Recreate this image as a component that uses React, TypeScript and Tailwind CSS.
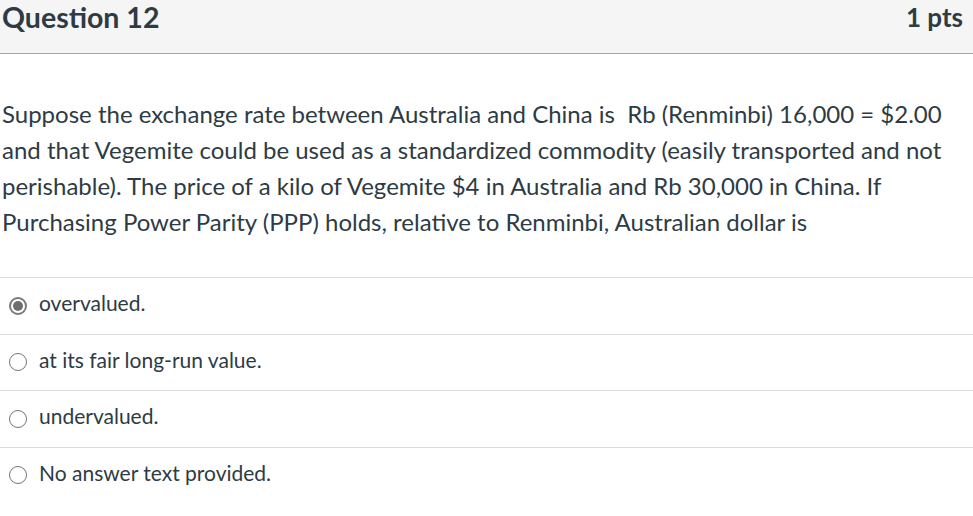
import React from "react";

const answers = [
  { text: "overvalued.", selected: true },
  { text: "at its fair long-run value.", selected: false },
  { text: "undervalued.", selected: false },
  { text: "No answer text provided.", selected: false },
];

const lines = [
  "Suppose the exchange rate between Australia and China is\u00a0 Rb (Renminbi) 16,000 = $2.00",
  "and that Vegemite could be used as a standardized commodity (easily transported and not",
  "perishable). The price of a kilo of Vegemite $4 in Australia and Rb 30,000 in China. If",
  "Purchasing Power Parity (PPP) holds, relative to Renminbi, Australian dollar is",
];

export default function App() {
  return (
    <div
      className="w-[973px] h-[516px] bg-white overflow-hidden text-[#2d3b45]"
      style={{ fontFamily: "Lato, 'Open Sans', sans-serif" }}
    >
      <div className="h-[54px] bg-[#f5f5f5] border-b border-[#a5a5a5] flex items-start justify-between pl-[2px] pr-[10px]">
        <div className="text-[28.5px] font-bold leading-none mt-[3px]">Question 12</div>
        <div className="text-[26px] font-bold leading-none mt-[4px]">1 pts</div>
      </div>
      <div className="pl-[2px] pr-[10px] pt-[42px] pb-[37px] text-[24px] leading-[36px]">
        {lines.map((l, i) => (
          <div key={i} className="whitespace-nowrap">{l}</div>
        ))}
      </div>
      <div>
        {answers.map((a, i) => (
          <div
            key={i}
            className="h-[56.5px] border-t border-[#dcdcdc] flex items-center pl-[9px] gap-[12px]"
          >
            {a.selected ? (
              <span className="w-[18px] h-[18px] rounded-full border-[2px] border-[#7a7a7a] bg-white flex items-center justify-center">
                <span className="w-[10px] h-[10px] rounded-full bg-[#6e6e6e]" />
              </span>
            ) : (
              <span className="w-[18px] h-[18px] rounded-full border border-[#767676] bg-white" />
            )}
            <span className="text-[21px] pb-[6px]">{a.text}</span>
          </div>
        ))}
      </div>
    </div>
  );
}
